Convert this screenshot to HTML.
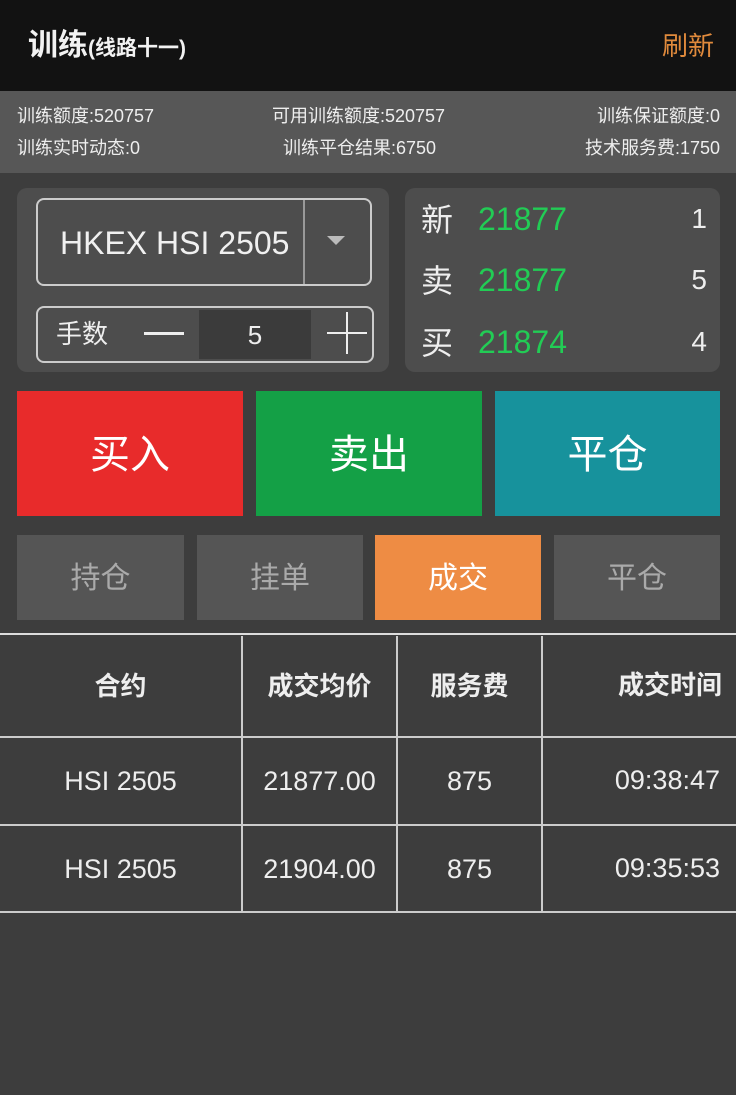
<!DOCTYPE html>
<html><head><meta charset="utf-8"><style>
*{margin:0;padding:0;box-sizing:border-box}
body{width:736px;height:1095px;background:#3d3d3d;font-family:"Liberation Sans","Noto Sans CJK SC",sans-serif;color:#eee;position:relative;overflow:hidden}
.a{position:absolute;line-height:1}
.c{display:flex;align-items:center;justify-content:center}
.b{padding-top:3px}
</style></head><body>
<div class="a" style="left:0;top:0;width:736px;height:91px;background:#121212"></div>
<div class="a" style="left:28px;top:31px;font-size:30px;font-weight:bold;color:#f2f2f2">训练<span style="font-size:21px">(线路十一)</span></div>
<div class="a" style="left:662px;top:33px;font-size:26px;color:#e08a3c">刷新</div>
<div class="a" style="left:0;top:91px;width:736px;height:82px;background:#575757"></div>
<div class="a" style="left:17px;top:107px;font-size:18px;color:#eee">训练额度:520757</div>
<div class="a" style="left:272px;top:107px;font-size:18px;color:#eee">可用训练额度:520757</div>
<div class="a" style="right:16px;top:107px;font-size:18px;color:#eee">训练保证额度:0</div>
<div class="a" style="left:17px;top:139px;font-size:18px;color:#eee">训练实时动态:0</div>
<div class="a" style="left:283px;top:139px;font-size:18px;color:#eee">训练平仓结果:6750</div>
<div class="a" style="right:16px;top:139px;font-size:18px;color:#eee">技术服务费:1750</div>

<div class="a" style="left:17px;top:188px;width:372px;height:184px;background:#4d4d4d;border-radius:10px"></div>
<div class="a" style="left:36px;top:198px;width:336px;height:88px;border:2px solid #ccc;border-radius:8px"></div>
<div class="a" style="left:60px;top:227px;font-size:32px;color:#f0f0f0">HKEX HSI 2505</div>
<div class="a" style="left:303px;top:200px;width:2px;height:84px;background:#999"></div>
<div class="a" style="left:327px;top:236px;width:0;height:0;border-left:9px solid transparent;border-right:9px solid transparent;border-top:9px solid #bbb"></div>
<div class="a" style="left:36px;top:306px;width:338px;height:57px;border:2px solid #ccc;border-radius:8px"></div>
<div class="a" style="left:56px;top:321px;font-size:26px;color:#eee">手数</div>
<div class="a" style="left:144px;top:332px;width:40px;height:3px;background:#eee"></div>
<div class="a c" style="left:199px;top:310px;width:112px;height:49px;background:#3b3b3b;font-size:26px">5</div>
<div class="a" style="left:327px;top:332px;width:40px;height:2px;background:#eee"></div>
<div class="a" style="left:346px;top:312px;width:2px;height:42px;background:#eee"></div>

<div class="a" style="left:405px;top:188px;width:315px;height:184px;background:#4d4d4d;border-radius:10px"></div>
<div class="a" style="left:421px;top:204px;font-size:32px;color:#eee">新</div>
<div class="a" style="left:421px;top:265px;font-size:32px;color:#eee">卖</div>
<div class="a" style="left:421px;top:327px;font-size:32px;color:#eee">买</div>
<div class="a" style="left:478px;top:203px;font-size:32px;color:#22cc55">21877</div>
<div class="a" style="left:478px;top:264px;font-size:32px;color:#22cc55">21877</div>
<div class="a" style="left:478px;top:326px;font-size:32px;color:#22cc55">21874</div>
<div class="a" style="right:29px;top:205px;font-size:28px;color:#eee">1</div>
<div class="a" style="right:29px;top:266px;font-size:28px;color:#eee">5</div>
<div class="a" style="right:29px;top:328px;font-size:28px;color:#eee">4</div>

<div class="a c b" style="left:17px;top:391px;width:226px;height:125px;background:#e82b2b;font-size:40px;color:#fff">买入</div>
<div class="a c b" style="left:256px;top:391px;width:226px;height:125px;background:#14a046;font-size:40px;color:#fff">卖出</div>
<div class="a c b" style="left:495px;top:391px;width:225px;height:125px;background:#17929c;font-size:40px;color:#fff">平仓</div>

<div class="a c b" style="left:17px;top:535px;width:167px;height:85px;background:#555;font-size:30px;color:#aaa">持仓</div>
<div class="a c b" style="left:197px;top:535px;width:166px;height:85px;background:#555;font-size:30px;color:#aaa">挂单</div>
<div class="a c b" style="left:375px;top:535px;width:166px;height:85px;background:#ee8c44;font-size:30px;color:#fff">成交</div>
<div class="a c b" style="left:554px;top:535px;width:166px;height:85px;background:#555;font-size:30px;color:#aaa">平仓</div>

<div class="a" style="left:0;top:633px;width:736px;height:2px;background:#ddd"></div>
<div class="a" style="left:0;top:736px;width:736px;height:2px;background:#ccc"></div>
<div class="a" style="left:0;top:824px;width:736px;height:2px;background:#ccc"></div>
<div class="a" style="left:0;top:911px;width:736px;height:2px;background:#ccc"></div>
<div class="a" style="left:241px;top:636px;width:2px;height:276px;background:#ccc"></div>
<div class="a" style="left:396px;top:636px;width:2px;height:276px;background:#ccc"></div>
<div class="a" style="left:541px;top:636px;width:2px;height:276px;background:#ccc"></div>

<div class="a c" style="left:0;top:636px;width:241px;height:100px;font-size:26px;font-weight:bold">合约</div>
<div class="a c" style="left:243px;top:636px;width:153px;height:100px;font-size:26px;font-weight:bold">成交均价</div>
<div class="a c" style="left:398px;top:636px;width:143px;height:100px;font-size:26px;font-weight:bold">服务费</div>
<div class="a" style="right:14px;top:672px;font-size:26px;font-weight:bold">成交时间</div>

<div class="a c" style="left:0;top:738px;width:241px;height:86px;font-size:27px">HSI 2505</div>
<div class="a c" style="left:243px;top:738px;width:153px;height:86px;font-size:27px">21877.00</div>
<div class="a c" style="left:398px;top:738px;width:143px;height:86px;font-size:27px">875</div>
<div class="a" style="right:16px;top:767px;font-size:27px">09:38:47</div>

<div class="a c" style="left:0;top:826px;width:241px;height:86px;font-size:27px">HSI 2505</div>
<div class="a c" style="left:243px;top:826px;width:153px;height:86px;font-size:27px">21904.00</div>
<div class="a c" style="left:398px;top:826px;width:143px;height:86px;font-size:27px">875</div>
<div class="a" style="right:16px;top:855px;font-size:27px">09:35:53</div>
</body></html>
